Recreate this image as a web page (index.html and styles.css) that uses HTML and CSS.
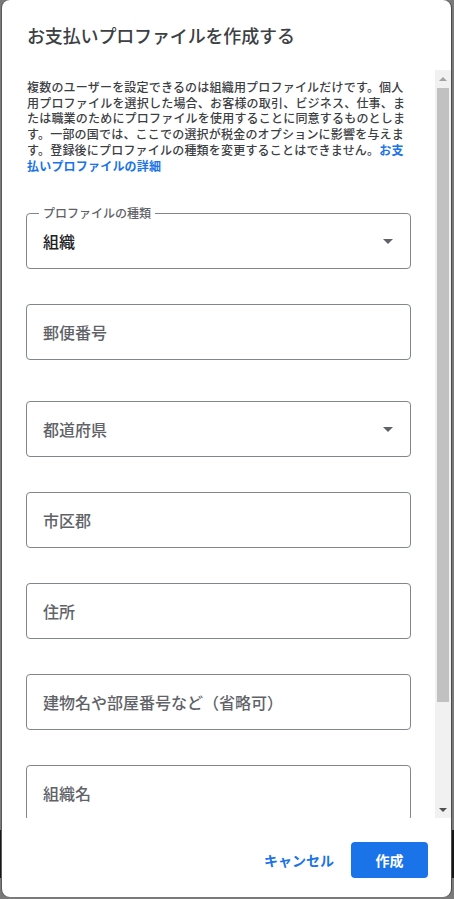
FILE: index.html
```html
<!DOCTYPE html>
<html lang="ja">
<head>
<meta charset="utf-8">
<title>お支払いプロファイルを作成する</title>
<link rel="stylesheet" href="styles.css">
</head>
<body>
<div class="dialog">
  <header class="dialog-header">
    <h1 class="dialog-title">お支払いプロファイルを作成する</h1>
  </header>
  <div class="dialog-body">
    <div class="dialog-content">
      <p class="intro">複数のユーザーを設定できるのは組織用プロファイルだけです。個人用プロファイルを選択した場合、お客様の取引、ビジネス、仕事、または職業のためにプロファイルを使用することに同意するものとします。一部の国では、ここでの選択が税金のオプションに影響を与えます。登録後にプロファイルの種類を変更することはできません。<a class="link" href="#">お支払いプロファイルの詳細</a></p>

      <div class="field field-select">
        <span class="field-label">プロファイルの種類</span>
        <span class="field-value">組織</span>
        <span class="select-arrow"></span>
      </div>

      <div class="field">
        <span class="field-placeholder">郵便番号</span>
      </div>

      <div class="field field-select field-spaced">
        <span class="field-placeholder">都道府県</span>
        <span class="select-arrow"></span>
      </div>

      <div class="field">
        <span class="field-placeholder">市区郡</span>
      </div>

      <div class="field">
        <span class="field-placeholder">住所</span>
      </div>

      <div class="field">
        <span class="field-placeholder">建物名や部屋番号など（省略可）</span>
      </div>

      <div class="field">
        <span class="field-placeholder">組織名</span>
      </div>
    </div>
    <div class="scrollbar">
      <div class="scroll-btn"><span class="arrow-up"></span></div>
      <div class="scroll-track"><div class="scroll-thumb"></div></div>
      <div class="scroll-btn"><span class="arrow-down"></span></div>
    </div>
  </div>
  <footer class="dialog-footer">
    <button class="btn btn-text" type="button">キャンセル</button>
    <button class="btn btn-primary" type="button">作成</button>
  </footer>
</div>
</body>
</html>
```

FILE: styles.css
```css
* {
  box-sizing: border-box;
}

html, body {
  margin: 0;
  padding: 0;
  height: 899px;
  overflow: hidden;
}

body {
  font-family: "Noto Sans CJK JP", "Noto Sans", Roboto, sans-serif;
  background: linear-gradient(to bottom, #7a7a7a 0, #7a7a7a 830px, #161616 830px, #161616 878px, #7a7a7a 878px);
}

.dialog {
  margin-left: 2px;
  width: 449px;
  height: 897px;
  background: #ffffff;
  border-radius: 8px;
  display: flex;
  flex-direction: column;
  overflow: hidden;
  box-shadow: 1px 0 0 #4a4a4a, -1px 0 0 #5a5a5a;
}

.dialog-header {
  height: 70px;
  flex: none;
  display: flex;
  align-items: center;
  padding-left: 25px;
}

.dialog-title {
  margin: 0;
  font-size: 18px;
  font-weight: 500;
  letter-spacing: -0.15px;
  color: #3c4043;
  line-height: 24px;
}

.dialog-body {
  height: 748px;
  flex: none;
  display: flex;
}

.dialog-content {
  flex: 1;
  overflow: hidden;
  padding: 9px 24px 0 24px;
}

.intro {
  margin: 0 0 40px 1px;
  font-size: 12px;
  line-height: 15.7px;
  letter-spacing: 0.2px;
  font-weight: 500;
  color: #3c4043;
}

.link {
  color: #1a73e8;
  font-weight: 700;
  text-decoration: none;
}

.field {
  position: relative;
  height: 56px;
  border: 1px solid #80868b;
  border-radius: 4px;
  display: flex;
  align-items: center;
  justify-content: space-between;
  padding: 0 17px 0 16px;
  margin-bottom: 35px;
}

.field-spaced {
  margin-top: 41px;
}

.field-label {
  position: absolute;
  top: -9px;
  left: 12px;
  padding: 0 4px;
  background: #ffffff;
  font-size: 12px;
  line-height: 16px;
  color: #5f6368;
  font-weight: 500;
}

.field-value {
  font-size: 16px;
  color: #202124;
  font-weight: 500;
  line-height: 24px;
}

.field-placeholder {
  font-size: 16px;
  color: #5f6368;
  font-weight: 500;
  line-height: 24px;
}

.select-arrow {
  width: 0;
  height: 0;
  border-left: 5px solid transparent;
  border-right: 5px solid transparent;
  border-top: 5px solid #5f6368;
}

.scrollbar {
  width: 16px;
  flex: none;
  background: #f1f1f1;
  display: flex;
  flex-direction: column;
}

.scroll-btn {
  height: 17px;
  flex: none;
  display: flex;
  align-items: center;
  justify-content: center;
}

.arrow-up {
  width: 0;
  height: 0;
  border-left: 4px solid transparent;
  border-right: 4px solid transparent;
  border-bottom: 4px solid #a3a3a3;
}

.arrow-down {
  width: 0;
  height: 0;
  border-left: 4px solid transparent;
  border-right: 4px solid transparent;
  border-top: 4px solid #505050;
}

.scroll-track {
  flex: 1;
  padding: 1px 2px 0 2px;
}

.scroll-thumb {
  height: 614px;
  background: #c1c1c1;
}

.dialog-footer {
  flex: 1;
  display: flex;
  justify-content: flex-end;
  align-items: flex-start;
  padding: 24px 23px 0 0;
}

.btn {
  font-family: "Noto Sans CJK JP", "Noto Sans", Roboto, sans-serif;
  font-size: 14px;
  font-weight: 700;
  height: 36px;
  border: none;
  border-radius: 4px;
  cursor: pointer;
  line-height: 36px;
}

.btn-text {
  background: transparent;
  color: #1a73e8;
  padding: 0 8px;
  margin-right: 9px;
}

.btn-primary {
  background: #1a73e8;
  color: #ffffff;
  width: 77px;
  padding: 0;
}
```
